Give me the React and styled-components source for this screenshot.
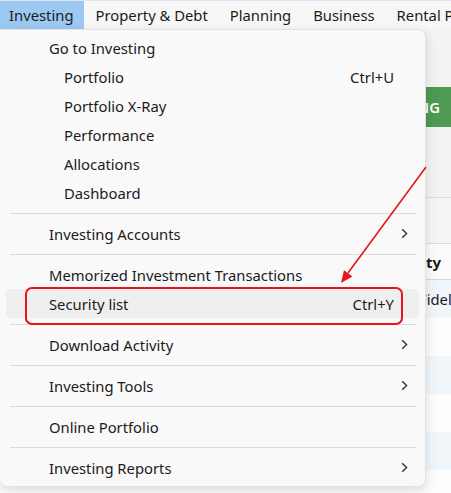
import React from 'react';
import styled, { createGlobalStyle } from 'styled-components';

const GlobalStyle = createGlobalStyle`
   html, body {
      margin: 0;
      padding: 0;
      background: #f3f3f3;
   }
   body {
      font-family: "Noto Sans", "Open Sans", Arial, sans-serif;
      color: #1b1b1b;
   }
`;

const menuGroups = [
   [
      { label: 'Go to Investing' },
      { label: 'Portfolio', sub: true, shortcut: 'Ctrl+U' },
      { label: 'Portfolio X-Ray', sub: true },
      { label: 'Performance', sub: true },
      { label: 'Allocations', sub: true },
      { label: 'Dashboard', sub: true },
   ],
   [{ label: 'Investing Accounts', more: true }],
   [
      { label: 'Memorized Investment Transactions' },
      { label: 'Security list', shortcut: 'Ctrl+Y', hover: true },
   ],
   [{ label: 'Download Activity', more: true }],
   [{ label: 'Investing Tools', more: true }],
   [{ label: 'Online Portfolio' }],
   [{ label: 'Investing Reports', more: true }],
];

const topMenus = ['Investing', 'Property & Debt', 'Planning', 'Business', 'Rental Property'];

const Chevron = () => (
   <svg width="7" height="11" viewBox="0 0 7 11">
      <path d="M1.2 1.2 L5.6 5.5 L1.2 9.8" fill="none" stroke="#333" strokeWidth="1.4" />
   </svg>
);

const App = () => {
   return (
      <Page>
         <GlobalStyle />
         <MenuBar>
            {topMenus.map((m, i) => (
               <MenuTitle key={m} active={i === 0}>
                  {m}
               </MenuTitle>
            ))}
         </MenuBar>

         <Content>
            <Toolbar>
               <GreenButton>ADD HOLDING</GreenButton>
            </Toolbar>
            <SubBar />
            <TableHead>
               <HeadCell>Security</HeadCell>
            </TableHead>
            {[0, 1, 2, 3, 4, 5].map(i => (
               <TableRow key={i} striped={i % 2 === 0}>
                  {i === 0 && <RowCell>Fidelity Contrafund</RowCell>}
               </TableRow>
            ))}
         </Content>

         <Dropdown>
            {menuGroups.map((group, gi) => (
               <React.Fragment key={gi}>
                  {gi > 0 && <Separator />}
                  {group.map(item => (
                     <Item key={item.label} sub={item.sub} hover={item.hover}>
                        <span className="label">{item.label}</span>
                        {item.shortcut && <span className="shortcut">{item.shortcut}</span>}
                        {item.more && (
                           <span className="more">
                              <Chevron />
                           </span>
                        )}
                     </Item>
                  ))}
               </React.Fragment>
            ))}
         </Dropdown>

         <Callout />
         <Arrow width="451" height="493" viewBox="0 0 451 493">
            <line x1="426" y1="167" x2="348" y2="273" stroke="#e8141a" strokeWidth="1.6" />
            <polygon points="341,283 352.4,276.5 344,270.2" fill="#e8141a" />
         </Arrow>
      </Page>
   );
};

export default App;

const Page = styled.div`
   position: relative;
   width: 451px;
   height: 493px;
   overflow: hidden;
   background: #f3f3f3;
`;

const MenuBar = styled.div`
   display: flex;
   align-items: stretch;
   height: 29px;
   background: #f7f7f7;
   border-top: 1px solid #dfe6f0;
   box-sizing: border-box;
`;

const MenuTitle = styled.div`
   display: flex;
   align-items: center;
   padding: 0 10px 0 12px;
   font-size: 14.8px;
   white-space: nowrap;
   background: ${props => (props.active ? '#9cc9f2' : 'transparent')};

   &:first-child {
      padding-left: 9px;
   }
`;

const Content = styled.div`
   display: flex;
   flex-direction: column;
`;

const Toolbar = styled.div`
   display: flex;
   justify-content: flex-end;
   height: 169px;
   padding-top: 58px;
   box-sizing: border-box;
   background: #f3f3f3;
   border-bottom: 1px solid #dadada;
`;

const GreenButton = styled.div`
   display: flex;
   align-items: center;
   justify-content: flex-end;
   width: 120px;
   height: 40px;
   padding-right: 11px;
   background: #4f9a52;
   color: #fff;
   font-size: 14.8px;
   font-weight: 600;
   white-space: nowrap;
   box-sizing: border-box;
`;

const SubBar = styled.div`
   height: 45px;
   background: #f5f5f5;
   border-bottom: 1px solid #dadada;
`;

const TableHead = styled.div`
   display: flex;
   justify-content: flex-end;
   align-items: center;
   height: 35px;
   background: #fbfbfb;
   border-bottom: 1px solid #dadada;
`;

const HeadCell = styled.div`
   font-weight: 700;
   font-size: 15px;
   margin-right: 10px;
`;

const TableRow = styled.div`
   display: flex;
   align-items: center;
   height: 38px;
   background: ${props => (props.striped ? '#f1f6fb' : '#fdfdfd')};
`;

const RowCell = styled.div`
   padding-left: 419px;
   font-size: 14.8px;
   white-space: nowrap;
`;

const Dropdown = styled.div`
   position: absolute;
   top: 29px;
   left: 0;
   width: 426px;
   box-sizing: border-box;
   padding: 3px 0 4px;
   background: #f9f9f9;
   border: 1px solid #e2e2e2;
   border-left: none;
   border-radius: 0 7px 7px 7px;
   box-shadow: 0 4px 12px rgba(0, 0, 0, 0.13);
`;

const Item = styled.div`
   display: flex;
   align-items: center;
   height: 29px;
   margin: 0 6px 0 6px;
   padding: 0 11px 0 ${props => (props.sub ? '58px' : '43px')};
   border-radius: 4px;
   font-size: 14.8px;
   background: ${props => (props.hover ? '#efefef' : 'transparent')};

   .label {
      flex: 1;
      white-space: nowrap;
   }

   .shortcut {
      margin-right: 14px;
   }

   .more {
      display: flex;
      align-items: center;
   }
`;

const Separator = styled.div`
   height: 12px;
   margin: 0 9px 0 10px;
   display: flex;
   align-items: center;

   &::after {
      content: '';
      flex: 1;
      height: 1px;
      background: #dcdcdc;
   }
`;

const Callout = styled.div`
   position: absolute;
   left: 25px;
   top: 287px;
   width: 378px;
   height: 38px;
   box-sizing: border-box;
   border: 2px solid #e8141a;
   border-radius: 7px;
   pointer-events: none;
`;

const Arrow = styled.svg`
   position: absolute;
   left: 0;
   top: 0;
   pointer-events: none;
`;
